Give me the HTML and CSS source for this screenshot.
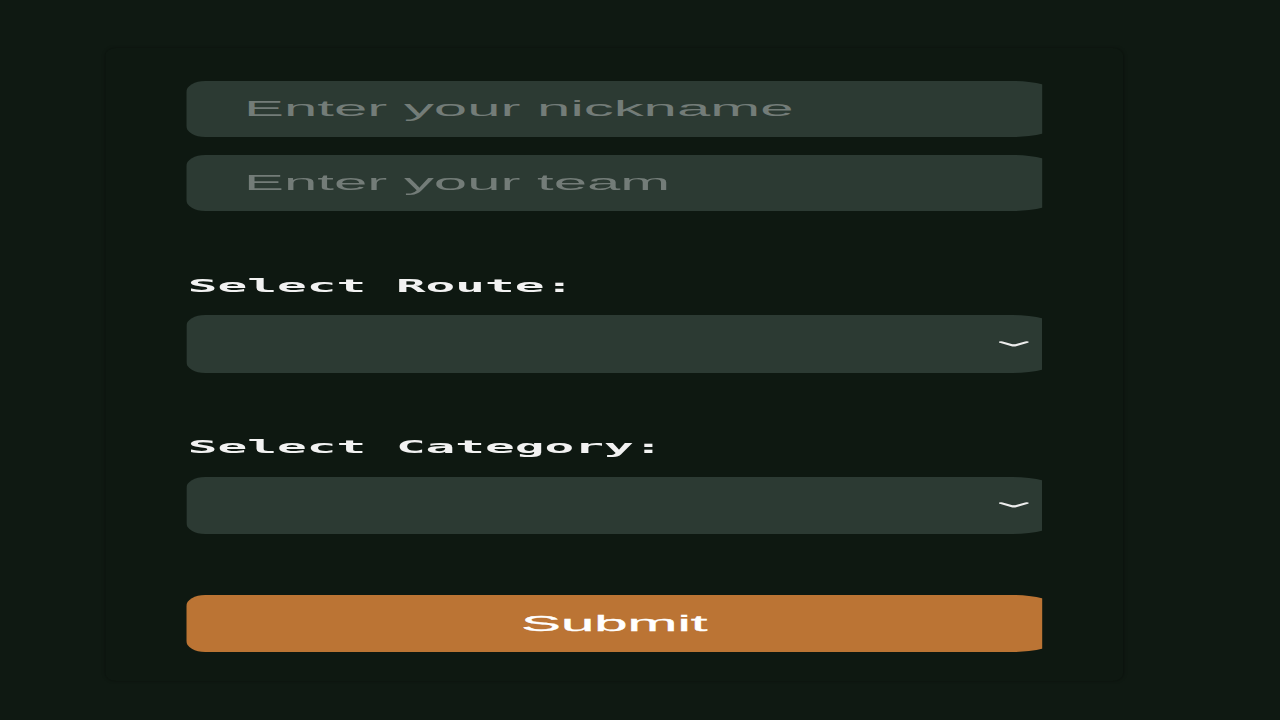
FILE: index.html
```html
<!DOCTYPE html>
<html lang="en">
<head>
<meta charset="utf-8">
<title>Register</title>
<link rel="stylesheet" href="styles.css">
</head>
<body>
<div class="stage">
  <div class="card">
    <form class="form">
      <div class="clip"><input class="field" type="text" placeholder="Enter your nickname"></div>
      <div class="clip gap"><input class="field" type="text" placeholder="Enter your team"></div>

      <label class="label" for="route">Select Route:</label>
      <div class="clip"><select class="field select" id="route"><option></option></select></div>

      <label class="label" for="category">Select Category:</label>
      <div class="clip"><select class="field select" id="category"><option></option></select></div>

      <div class="clip submit-wrap"><button class="submit" type="button">Submit</button></div>
    </form>
  </div>
</div>
</body>
</html>
```

FILE: styles.css
```css
html, body {
  margin: 0;
  padding: 0;
  background: #0f1912;
  height: 720px;
  overflow: hidden;
}

.stage {
  width: 474px;
  transform: scaleX(2.7);
  transform-origin: 0 0;
}

.card {
  margin-left: 39.4px;
  margin-top: 48px;
  width: 376.2px;
  box-sizing: border-box;
  padding: 33px 30px 29px 30px;
  background: #0e1811;
  box-shadow: 0 0 2px rgba(0, 0, 0, 0.35);
  border-radius: 4px / 8px;
}

.form {
  display: flex;
  flex-direction: column;
}

.clip {
  overflow: hidden;
  width: 100%;
}

.gap {
  margin-top: 18px;
}

.field {
  display: block;
  box-sizing: border-box;
  width: calc(100% + 5px);
  height: 56px;
  margin: 0;
  border: none;
  outline: none;
  background: #2c3a33;
  border-radius: 7px 16px 16px 7px / 11px 12px 12px 11px;
  padding: 0 0 0 21px;
  font-family: "Liberation Sans", Arial, sans-serif;
  font-size: 22.2px;
  color: #e8e8e8;
}

.field::placeholder {
  color: #737c78;
}

.select {
  -webkit-appearance: none;
  appearance: none;
  height: 57.5px;
  background-image: url("data:image/svg+xml,%3Csvg xmlns='http://www.w3.org/2000/svg' width='11' height='6' viewBox='0 0 11 6'%3E%3Cpath d='M0.8 1.1 L5.5 4.7 L10.2 1.1' fill='none' stroke='%23eeeeee' stroke-width='1.8' stroke-linecap='round' stroke-linejoin='round'/%3E%3C/svg%3E");
  background-repeat: no-repeat;
  background-position: right 10px center;
  background-size: 11px 6px;
}

.label {
  display: block;
  margin: 63.5px 0 18.5px 0.2px;
  font-family: "DejaVu Sans Mono", "Liberation Mono", monospace;
  font-weight: bold;
  font-size: 18.3px;
  line-height: 22px;
  color: #f2f2f2;
}

.submit-wrap {
  margin-top: 61px;
}

.submit {
  display: block;
  box-sizing: border-box;
  width: calc(100% + 5px);
  height: 57px;
  margin: 0;
  border: none;
  background: #bb7434;
  border-radius: 7px 16px 16px 7px / 11px 12px 12px 11px;
  font-family: "Liberation Sans", Arial, sans-serif;
  font-weight: normal;
  font-size: 22.2px;
  color: #ffffff;
  -webkit-text-stroke: 0.3px #ffffff;
  padding: 0 5px 0 0;
  cursor: pointer;
}
```
